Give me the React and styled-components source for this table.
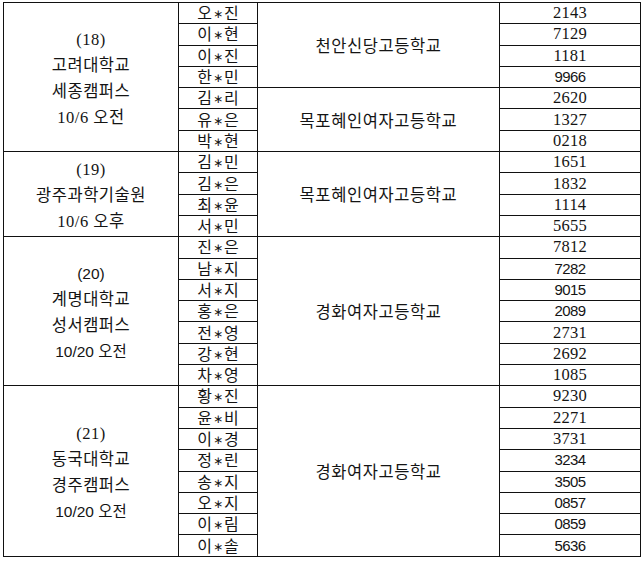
import React from "react";
import styled, { createGlobalStyle } from "styled-components";

const groups = [
  {
    label: [
      { text: "(18)" },
      { text: "고려대학교" },
      { text: "세종캠퍼스" },
      { text: "10/6 오전" },
    ],
    schools: [
      {
        name: "천안신당고등학교",
        students: [
          ["오", "진", "2143"],
          ["이", "현", "7129"],
          ["이", "진", "1181"],
          ["한", "민", "9966", true],
        ],
      },
      {
        name: "목포혜인여자고등학교",
        students: [
          ["김", "리", "2620"],
          ["유", "은", "1327"],
          ["박", "현", "0218"],
        ],
      },
    ],
  },
  {
    label: [{ text: "(19)" }, { text: "광주과학기술원" }, { text: "10/6 오후" }],
    schools: [
      {
        name: "목포혜인여자고등학교",
        students: [
          ["김", "민", "1651"],
          ["김", "은", "1832"],
          ["최", "윤", "1114"],
          ["서", "민", "5655"],
        ],
      },
    ],
  },
  {
    label: [
      { text: "(20)", sans: true },
      { text: "계명대학교" },
      { text: "성서캠퍼스" },
      { text: "10/20 오전", sans: true },
    ],
    schools: [
      {
        name: "경화여자고등학교",
        students: [
          ["진", "은", "7812"],
          ["남", "지", "7282", true],
          ["서", "지", "9015", true],
          ["홍", "은", "2089", true],
          ["전", "영", "2731"],
          ["강", "현", "2692"],
          ["차", "영", "1085"],
        ],
      },
    ],
  },
  {
    label: [
      { text: "(21)" },
      { text: "동국대학교" },
      { text: "경주캠퍼스" },
      { text: "10/20 오전", sans: true },
    ],
    schools: [
      {
        name: "경화여자고등학교",
        students: [
          ["황", "진", "9230"],
          ["윤", "비", "2271"],
          ["이", "경", "3731"],
          ["정", "린", "3234", true],
          ["송", "지", "3505", true],
          ["오", "지", "0857", true],
          ["이", "림", "0859", true],
          ["이", "솔", "5636", true],
        ],
      },
    ],
  },
];

const GlobalStyle = createGlobalStyle`
  html, body {
    margin: 0;
    padding: 0;
    background: #fff;
  }
`;

const Page = styled.div`
  padding: 2px 0 0 3px;
`;

const Table = styled.table`
  border-collapse: collapse;
  table-layout: fixed;
  width: 638px;
  color: #141414;
  font-family: "Liberation Serif", "Noto Sans CJK KR", serif;
  font-size: 16px;
`;

const Row = styled.tr`
  height: 21.3px;
`;

const Cell = styled.td`
  border: 1px solid #111;
  padding: 0;
  text-align: center;
  vertical-align: middle;
  line-height: 18px;
  white-space: nowrap;
`;

const LabelCell = styled(Cell)`
  padding-top: 4px;
`;

const LabelLine = styled.div`
  line-height: 26px;
  font-family: ${(p) =>
    p.$sans
      ? '"Liberation Sans", "Noto Sans CJK KR", sans-serif'
      : '"Liberation Serif", "Noto Sans CJK KR", serif'};
  font-size: ${(p) => (p.$sans ? "15.5px" : "16.5px")};
  letter-spacing: ${(p) => (p.$sans ? "0" : "0.5px")};
`;

const Name = styled.span`
  font-family: "Noto Sans CJK KR", sans-serif;
  font-size: 16px;
  line-height: 18px;
`;

const Star = styled.span`
  font-family: "DejaVu Sans", sans-serif;
  font-size: 12px;
  margin: 0 1px;
  vertical-align: 1px;
`;

const SchoolCell = styled(Cell)`
  font-family: "Noto Sans CJK KR", sans-serif;
  font-size: 16.5px;
  letter-spacing: 0.6px;
`;

const Code = styled(Cell)`
  font-family: ${(p) =>
    p.$sans ? '"Liberation Sans", sans-serif' : '"Liberation Serif", serif'};
  font-size: ${(p) => (p.$sans ? "15px" : "16.5px")};
  letter-spacing: ${(p) => (p.$sans ? "-0.6px" : "0.2px")};
`;

export default function App() {
  const rows = [];
  groups.forEach((g, gi) => {
    const total = g.schools.reduce((n, s) => n + s.students.length, 0);
    let first = true;
    g.schools.forEach((s, si) => {
      s.students.forEach((st, i) => {
        rows.push(
          <Row key={`${gi}-${si}-${i}`}>
            {first && (
              <LabelCell rowSpan={total}>
                {g.label.map((l, li) => (
                  <LabelLine key={li} $sans={l.sans}>
                    {l.text}
                  </LabelLine>
                ))}
              </LabelCell>
            )}
            <Cell>
              <Name>
                {st[0]}
                <Star>∗</Star>
                {st[1]}
              </Name>
            </Cell>
            {i === 0 && (
              <SchoolCell rowSpan={s.students.length}>{s.name}</SchoolCell>
            )}
            <Code $sans={st[3]}>{st[2]}</Code>
          </Row>
        );
        first = false;
      });
    });
  });

  return (
    <>
      <GlobalStyle />
      <Page>
        <Table>
          <colgroup>
            <col style={{ width: 175 }} />
            <col style={{ width: 79 }} />
            <col style={{ width: 242 }} />
            <col style={{ width: 141 }} />
          </colgroup>
          <tbody>{rows}</tbody>
        </Table>
      </Page>
    </>
  );
}
